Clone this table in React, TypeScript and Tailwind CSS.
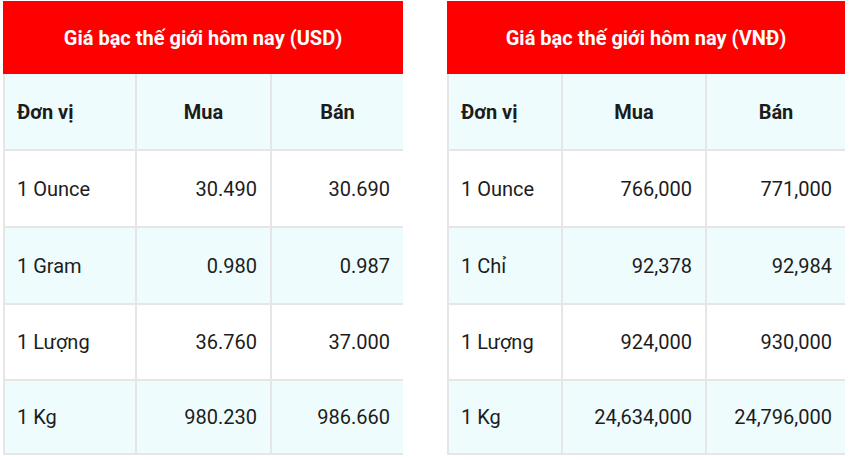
import React from "react";

type Row = [string, string, string];

const usd: Row[] = [
  ["1 Ounce", "30.490", "30.690"],
  ["1 Gram", "0.980", "0.987"],
  ["1 Lượng", "36.760", "37.000"],
  ["1 Kg", "980.230", "986.660"],
];

const vnd: Row[] = [
  ["1 Ounce", "766,000", "771,000"],
  ["1 Chỉ", "92,378", "92,984"],
  ["1 Lượng", "924,000", "930,000"],
  ["1 Kg", "24,634,000", "24,796,000"],
];

function PriceTable({
  title,
  rows,
  cols,
  width,
}: {
  title: string;
  rows: Row[];
  cols: string;
  width: string;
}) {
  return (
    <div className={`flex flex-col ${width}`}>
      <div className="h-[73px] bg-[#fe0000] flex items-center justify-center text-white font-bold text-[20px]">
        {title}
      </div>
      <div className={`grid ${cols} grid-rows-[75px_75px_75px_74px_72px] gap-[2px] bg-[#e6e6e6] px-[2px] pb-[2px]`}>
        <div className="bg-[#effcfd] flex items-center pl-[12px] font-bold">Đơn vị</div>
        <div className="bg-[#effcfd] flex items-center justify-center font-bold">Mua</div>
        <div className="bg-[#effcfd] flex items-center justify-center font-bold">Bán</div>
        {rows.map((r, i) => {
          const bg = i % 2 === 0 ? "bg-white" : "bg-[#effcfd]";
          return (
            <React.Fragment key={i}>
              <div className={`${bg} flex items-center pl-[12px]`}>{r[0]}</div>
              <div className={`${bg} flex items-center justify-end pr-[13px]`}>{r[1]}</div>
              <div className={`${bg} flex items-center justify-end pr-[13px]`}>{r[2]}</div>
            </React.Fragment>
          );
        })}
      </div>
    </div>
  );
}

export default function App() {
  return (
    <div
      className="w-[850px] h-[460px] overflow-hidden bg-white flex gap-[44px] pt-[1px] pl-[3px] text-[20px] text-[#1c1c1c]"
      style={{ fontFamily: "Roboto, 'Noto Sans', sans-serif" }}
    >
      <PriceTable
        title="Giá bạc thế giới hôm nay (USD)"
        rows={usd}
        cols="grid-cols-[130px_133px_131px]"
        width="w-[400px]"
      />
      <PriceTable
        title="Giá bạc thế giới hôm nay (VNĐ)"
        rows={vnd}
        cols="grid-cols-[112px_142px_138px]"
        width="w-[398px]"
      />
    </div>
  );
}
